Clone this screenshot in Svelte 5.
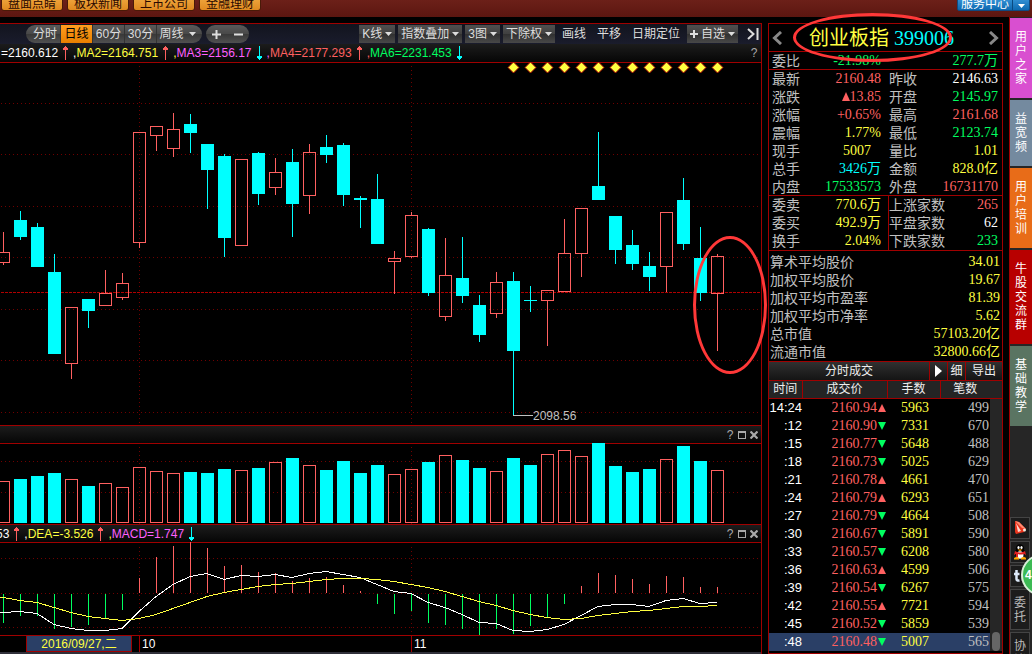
<script>
const page_title = '创业板指 399006'

const topMenu = ['盘面点睛', '板块新闻', '上市公司', '金融理财']
const periods = ['分时', '日线', '60分', '30分', '周线']
const diamonds = Array.from({ length: 13 }, (_, i) => 513 + i * 17)

const maList = [
    { text: '=2160.612', color: 'white', dir: 'up' },
    { text: 'MA2=2164.751', color: 'yellow', dir: 'up' },
    { text: 'MA3=2156.17', color: 'magenta', dir: 'down' },
    { text: 'MA4=2177.293', color: 'red', dir: 'up' },
    { text: 'MA6=2231.453', color: 'green', dir: 'down' },
]
const macdList = [
    { text: '53', color: 'white', dir: 'up' },
    { text: 'DEA=-3.526', color: 'yellow', dir: 'up' },
    { text: 'MACD=1.747', color: 'magenta', dir: 'down' },
]

// up, high, top, bottom, low, volume, macd, dif, dea
const days = [
    [1, 232, 252, 263, 265, 481, 623, 612, 597],
    [0, 211, 220, 237, 240, 479, 616, 611, 600],
    [0, 223, 227, 267, 267, 476, 616, 613, 602],
    [0, 254, 272, 354, 354, 473, 629, 624, 607],
    [1, 307, 307, 364, 379, 479, 627, 628, 612],
    [0, 299, 299, 311, 328, 486, 625, 630, 616],
    [1, 270, 293, 306, 306, 483, 618, 630, 618],
    [1, 273, 283, 298, 300, 487, 610, 628, 620],
    [1, 132, 132, 243, 248, 467, 578, 611, 618],
    [1, 126, 126, 136, 151, 471, 557, 596, 614],
    [1, 113, 129, 149, 157, 473, 546, 584, 608],
    [0, 114, 124, 133, 153, 472, 542, 576, 602],
    [0, 144, 144, 170, 209, 473, 548, 573, 596],
    [0, 154, 156, 238, 257, 469, 566, 579, 592],
    [1, 159, 159, 246, 246, 470, 565, 575, 589],
    [0, 152, 153, 194, 205, 468, 572, 576, 586],
    [1, 158, 172, 188, 195, 462, 573, 574, 584],
    [0, 149, 162, 204, 237, 458, 581, 577, 583],
    [1, 144, 152, 196, 214, 465, 578, 573, 581],
    [0, 135, 147, 155, 163, 470, 577, 571, 579],
    [0, 143, 145, 195, 206, 461, 585, 574, 578],
    [0, 196, 198, 200, 228, 473, 591, 577, 578],
    [0, 174, 199, 244, 244, 465, 604, 584, 579],
    [1, 251, 258, 262, 294, 474, 614, 591, 581],
    [1, 212, 215, 257, 258, 469, 611, 593, 584],
    [0, 228, 229, 293, 296, 462, 623, 602, 587],
    [1, 238, 275, 317, 321, 455, 625, 607, 591],
    [0, 237, 278, 296, 303, 460, 629, 614, 596],
    [0, 295, 305, 335, 342, 468, 635, 622, 601],
    [1, 272, 282, 314, 318, 471, 629, 623, 605],
    [0, 272, 281, 351, 415, 458, 634, 630, 610],
    [0, 286, 300, 301, 312, 465, 626, 631, 614],
    [1, 290, 290, 301, 346, 454, 618, 629, 617],
    [1, 219, 253, 292, 292, 450, 604, 624, 619],
    [1, 208, 208, 254, 277, 456, 586, 615, 618],
    [0, 132, 186, 200, 200, 443, 573, 606, 615],
    [0, 216, 216, 250, 264, 466, 575, 604, 613],
    [0, 230, 245, 264, 270, 472, 579, 604, 611],
    [0, 252, 266, 277, 291, 469, 584, 606, 610],
    [1, 212, 212, 267, 292, 459, 576, 600, 608],
    [0, 178, 200, 244, 250, 446, 577, 598, 606],
    [0, 227, 258, 293, 301, 461, 587, 603, 606],
    [1, 254, 256, 294, 351, 470, 587, 602, 605],
].map(([up, high, top, bottom, low, vol, macd, dif, dea], i) => ({
    x: 3 + i * 17, up, high, top, bottom, low, vol, macd, dif, dea
}))

const difLine = days.map(d => `${d.x},${d.dif - 542.5}`).join(' ')
const deaLine = days.map(d => `${d.x},${d.dea - 542.5}`).join(' ')

const quotes = [
    ['最新', '2160.48', 'red', '昨收', '2146.63', 'white'],
    ['涨跌', '▲13.85', 'red', '开盘', '2145.97', 'green'],
    ['涨幅', '+0.65%', 'red', '最高', '2161.68', 'red'],
    ['震幅', '1.77%', 'yellow', '最低', '2123.74', 'green'],
    ['现手', '5007', 'yellow', '量比', '1.01', 'yellow'],
    ['总手', '3426万', 'cyan', '金额', '828.0亿', 'yellow'],
    ['内盘', '17533573', 'green', '外盘', '16731170', 'red'],
]
const counts = [
    ['委卖', '770.6万', 'yellow', '上涨家数', '265', 'red'],
    ['委买', '492.9万', 'yellow', '平盘家数', '62', 'white'],
    ['换手', '2.04%', 'yellow', '下跌家数', '233', 'green'],
]
const summary = [
    ['算术平均股价', '34.01'],
    ['加权平均股价', '19.67'],
    ['加权平均市盈率', '81.39'],
    ['加权平均市净率', '5.62'],
    ['总市值', '57103.20亿'],
    ['流通市值', '32800.66亿'],
]
const trades = [
    ['14:24', '2160.94', 1, 5963, 499],
    [':12', '2160.90', 0, 7331, 670],
    [':15', '2160.77', 0, 5648, 488],
    [':18', '2160.73', 0, 5025, 629],
    [':21', '2160.78', 1, 4661, 470],
    [':24', '2160.79', 1, 6293, 651],
    [':27', '2160.79', 0, 4664, 508],
    [':30', '2160.67', 0, 5891, 590],
    [':33', '2160.57', 0, 6208, 580],
    [':36', '2160.63', 1, 4599, 506],
    [':39', '2160.54', 0, 6267, 575],
    [':42', '2160.55', 1, 7721, 594],
    [':45', '2160.52', 0, 5859, 539],
    [':48', '2160.48', 0, 5007, 565],
]
const sideTabs = [
    ['用户之家', 'pink'],
    ['益宽频', 'slate'],
    ['用户培训', 'orange'],
    ['牛股交流群', 'crimson'],
    ['基础教学', 'moss'],
]

let period = $state('日线')
let selected = $state(13)
</script>

<svelte:head>
    <title>{page_title}</title>
</svelte:head>

{#snippet caret()}
    <svg width="7" height="4" viewBox="0 0 7 4"><path d="M0 0h7L3.500 4z" fill="currentColor" /></svg>
{/snippet}

{#snippet indicators(list)}
    {#each list as item, i}
        <span class={item.color}>{#if i > 0}<span class={list[i - 1].color}>,</span>{/if}{item.text}</span>
        <svg width="15" height="16" viewBox="0 0 15 16" shape-rendering="crispEdges">
            {#if item.dir == 'up'}
                <path d="M7 1h1v1h1v1h1v2h-2v10h-1v-10h-2v-2h1v-1h1z" fill="#ff6060" />
            {:else}
                <path d="M7 1h1v10h2v2h-1v1h-1v1h-1v-1h-1v-1h-1v-2h2z" fill="#00ffff" />
            {/if}
        </svg>
    {/each}
{/snippet}

{#snippet paneTools()}
    <div class="pane_tools">
        <button aria-label="帮助">?</button>
        <button aria-label="最大化">
            <svg width="8" height="8" viewBox="0 0 8 8" shape-rendering="crispEdges"><path d="M0 0h8v8H0zM1 2v5h6V2z" fill="currentColor" fill-rule="evenodd" /></svg>
        </button>
        <button aria-label="关闭">
            <svg width="8" height="8" viewBox="0 0 8 8"><path d="M.5 .5l7 7M7.500 .5l-7 7" fill="none" stroke="currentColor" stroke-width="2.200" /></svg>
        </button>
    </div>
{/snippet}

<div class="app">
    <header class="top">
        <nav>
            {#each topMenu as name}
                <button>{name}</button>
            {/each}
        </nav>
        <button class="service"><span>服务中心</span><i>{@render caret()}</i></button>
    </header>

    <main>
        <section class="charts">
            <div class="toolbar">
                <div class="pill periods">
                    {#each periods as name}
                        <button class:active={period == name} onclick={() => period = name}>
                            {name}{#if name == '周线'}{@render caret()}{/if}
                        </button>
                    {/each}
                </div>
                <div class="pill zoom">
                    <button aria-label="放大"><svg width="9" height="9" viewBox="0 0 9 9"><path d="M4.500 0v9M0 4.500h9" stroke="#ddd" stroke-width="2" /></svg></button>
                    <button aria-label="缩小"><svg width="9" height="9" viewBox="0 0 9 9"><path d="M0 4.500h9" stroke="#ddd" stroke-width="2" /></svg></button>
                </div>
                <div class="tools">
                    <button class="drop">K线{@render caret()}</button>
                    <button class="drop">指数叠加{@render caret()}</button>
                    <button class="drop">3图{@render caret()}</button>
                    <button class="drop">下除权{@render caret()}</button>
                    <button class="plain">画线</button>
                    <button class="plain">平移</button>
                    <button class="plain">日期定位</button>
                    <button class="drop">
                        <svg width="8" height="8" viewBox="0 0 8 8"><path d="M4 0v8M0 4h8" stroke="#ddd" stroke-width="2" /></svg>自选{@render caret()}
                    </button>
                    <button class="end" aria-label="收起">
                        <svg width="12" height="12" viewBox="0 0 12 12"><path d="M1 1l5.500 5L1 11M10.500 0v12" fill="none" stroke="#ddd" stroke-width="2" /></svg>
                    </button>
                </div>
            </div>

            <div class="ind ma_ind">
                {@render indicators(maList)}
                <div class="pane_tools"><button aria-label="均线帮助">?</button></div>
            </div>

            <!-- K线 -->
            <div class="pane">
                <svg class="plot kline" viewBox="0 63 761 362" preserveAspectRatio="none" shape-rendering="crispEdges">
                    {#each [103, 154, 206, 257, 309, 360, 412] as y}
                        <line class="grid" x1="1" x2="761" y1={y + 0.5} y2={y + 0.5} />
                    {/each}
                    <line class="grid" x1="139.500" x2="139.500" y1="66" y2="425" />
                    <line class="grid" x1="411.500" x2="411.500" y1="66" y2="425" />
                    <line class="last" x1="1" x2="761" y1="292.500" y2="292.500" />
                    {#each days as d}
                        {#if d.up}
                            <path class="up" d="M{d.x + 0.5} {d.high}V{d.top}M{d.x + 0.5} {d.bottom}V{d.low}M{d.x - 5.5} {d.top + 0.5}h12V{d.bottom - 0.5}h-12z" />
                        {:else}
                            <rect class="down" x={d.x} y={d.high} width="1" height={d.low - d.high} />
                            <rect class="down" x={d.x - 6} y={d.top} width="13" height={d.bottom - d.top} />
                        {/if}
                    {/each}
                    {#each diamonds as x}
                        <path d="M{x + 0.5} 62l5.500 5.500l-5.500 5.500l-5.500-5.500z" fill="#ffff40" stroke="#a00000" shape-rendering="auto" />
                    {/each}
                    <path d="M513 415.500h20" stroke="#c0c0c0" />
                    <text x="533" y="420">2098.56</text>
                </svg>
                <i class="mark mark_k"></i>
            </div>

            <!-- 成交量 -->
            <div class="ind">{@render paneTools()}</div>
            <svg class="plot volume" viewBox="0 444 761 80" preserveAspectRatio="none" shape-rendering="crispEdges">
                <line class="grid" x1="1" x2="761" y1="461.500" y2="461.500" />
                <line class="grid" x1="1" x2="761" y1="492.500" y2="492.500" />
                <line class="grid" x1="139.500" x2="139.500" y1="447" y2="524" />
                <line class="grid" x1="411.500" x2="411.500" y1="447" y2="524" />
                {#each days as d}
                    {#if d.up}
                        <rect class="up" x={d.x - 5.5} y={d.vol + 0.5} width="12" height={522 - d.vol} />
                    {:else}
                        <rect class="down" x={d.x - 6} y={d.vol} width="13" height={523 - d.vol} />
                    {/if}
                {/each}
            </svg>

            <!-- MACD -->
            <div class="ind macd_ind">
                {@render indicators(macdList)}
                {@render paneTools()}
            </div>
            <svg class="plot macd" viewBox="0 0 761 92" preserveAspectRatio="none" shape-rendering="crispEdges">
                {#each [15, 50, 84] as y}
                    <line class="grid" x1="1" x2="761" y1={y + 0.5} y2={y + 0.5} />
                {/each}
                <line class="grid" x1="139.500" x2="139.500" y1="4" y2="92" />
                <line class="grid" x1="411.500" x2="411.500" y1="4" y2="92" />
                {#each days as d}
                    {#if d.macd < 593}
                        <line x1={d.x + 0.5} x2={d.x + 0.5} y1={d.macd - 543} y2="50" stroke="#ff6060" />
                    {:else}
                        <line x1={d.x + 0.5} x2={d.x + 0.5} y1="51" y2={d.macd - 543} stroke="#00ff60" />
                    {/if}
                {/each}
                <polyline points="0,69.500 {difLine}" stroke="#ffffff" />
                <polyline points="0,54.500 {deaLine}" stroke="#ffff40" />
            </svg>

            <div class="axis">
                <span class="date">2016/09/27,二</span>
                <span class="month">10</span>
                <span class="month">11</span>
            </div>
        </section>

        <section class="quote">
            <div class="title">
                <button aria-label="上一只"><svg width="10" height="14" viewBox="0 0 10 14"><path d="M9 1L2.500 7L9 13" fill="none" stroke="#888" stroke-width="3" /></svg></button>
                <h1>创业板指 <span class="cyan">399006</span></h1>
                <button aria-label="下一只"><svg width="10" height="14" viewBox="0 0 10 14"><path d="M1 1l6.500 6L1 13" fill="none" stroke="#888" stroke-width="3" /></svg></button>
                <i class="mark mark_title"></i>
            </div>
            <div class="block">
                <div class="row">
                    <span>委比</span><b class="green">-21.98%</b><span></span><b class="green">277.7万</b>
                </div>
            </div>
            <div class="block">
                {#each quotes as [k1, v1, c1, k2, v2, c2]}
                    <div class="row">
                        <span>{k1}</span><b class={c1} class:now={k1 == '现手'}>{#if v1[0] == '▲'}<svg width="8" height="9" viewBox="0 0 8 9"><path d="M4 0l4 9H0z" fill="#ff6060" /></svg>{v1.slice(1)}{:else}{v1}{/if}</b>
                        <span>{k2}</span><b class={c2}>{v2}</b>
                    </div>
                {/each}
            </div>
            <div class="block counts">
                {#each counts as [k1, v1, c1, k2, v2, c2]}
                    <div class="row">
                        <span>{k1}</span><b class={c1}>{v1}</b>
                        <span class="split">{k2}</span><b class={c2}>{v2}</b>
                    </div>
                {/each}
            </div>
            <div class="block summary">
                {#each summary as [k, v]}
                    <div class="sum_row"><span>{k}</span><b class="yellow">{v}</b></div>
                {/each}
            </div>

            <div class="deal_bar">
                <strong>分时成交</strong>
                <button aria-label="播放"><svg width="7" height="12" viewBox="0 0 7 12"><path d="M0 0l7 6l-7 6z" fill="#fff" /></svg></button>
                <button>细</button>
                <button class="export">导出</button>
            </div>
            <div class="deal">
                <table>
                    <thead>
                        <tr><th class="c_time">时间</th><th class="c_price">成交价</th><th class="c_vol">手数</th><th class="c_num">笔数</th><th class="c_bar"></th></tr>
                    </thead>
                    <tbody>
                        {#each trades as [time, price, up, vol, num], i}
                            <tr class:selected={selected == i} onclick={() => selected = i}>
                                <td class="time">{time}</td>
                                <td class="price">{price}<svg width="8" height="8" viewBox="0 0 8 8">{#if up}<path d="M4 0l4 8H0z" fill="#ff6060" />{:else}<path d="M0 0h8L4 8z" fill="#00ff60" />{/if}</svg></td>
                                <td class="vol">{vol}</td>
                                <td class="num">{num}</td>
                                <td class="bar"></td>
                            </tr>
                        {/each}
                    </tbody>
                </table>
                <i class="thumb"></i>
            </div>
        </section>

        <aside>
            {#each sideTabs as [name, color]}
                <button class="tab {color}">{name}</button>
            {/each}
            <div class="side_tools">
                <button aria-label="喇叭">
                    <svg width="16" height="16" viewBox="0 0 16 16"><path d="M3 1l4 1 7 7-2 3-8 2-1-2z" fill="#e8341c" /><path d="M4 3l2 9 3-1z" fill="#ffd8d0" /><path d="M3 1l4 1 7 7-4-1z" fill="#ff8a70" /><circle cx="12.500" cy="10" r="1.500" fill="#f4ece0" /></svg>
                </button>
                <button aria-label="QQ">
                    <svg width="16" height="16" viewBox="0 0 16 16"><ellipse cx="8" cy="9" rx="5" ry="5.500" fill="#000" /><circle cx="8" cy="4.500" r="4.200" fill="#000" /><ellipse cx="8" cy="11" rx="3.500" ry="3.800" fill="#fff" /><ellipse cx="6.500" cy="3.500" rx="1.100" ry="1.500" fill="#fff" /><ellipse cx="9.500" cy="3.500" rx="1.100" ry="1.500" fill="#fff" /><path d="M5.500 5.500h5l-2.500 1.700z" fill="#ffa800" /><path d="M3 7q5 3 10 0l1 4-2-1q-4 1-6 0v3H4v-3l-2 1z" fill="#e02020" /><path d="M2 14q3-2 5 0v1.500H2zM9 14q3-2 5 0v1.500H9z" fill="#ffa800" /></svg>
                </button>
                <button aria-label="微博">
                    <svg width="16" height="16" viewBox="0 0 16 16"><path d="M4.500 2v9q0 2 3 1.500M2 6h5.500M11 8v5" fill="none" stroke="#dce8f8" stroke-width="2.500" /></svg>
                </button>
                <button class="word">委托</button>
                <button class="word">协议</button>
                <span class="bubble">4</span>
            </div>
        </aside>
    </main>
</div>

<style>
:global(body) {
    margin: 0;
    background: #000;
}
.app {
    overflow: hidden;
    background: #000;
    color: #ddd;
    font: 12px/18px "Liberation Sans", "Noto Sans CJK SC", sans-serif;
}
* {
    box-sizing: border-box;
}
button {
    display: flex;
    align-items: center;
    justify-content: center;
    margin: 0;
    padding: 0;
    border: 0;
    background: none;
    color: inherit;
    font: inherit;
    white-space: nowrap;
    cursor: pointer;
}
svg {
    flex: none;
}
i {
    font-style: normal;
}
.white { color: #fff; }
.yellow { color: #ffff40; }
.red { color: #ff6060; }
.green { color: #00ff60; }
.cyan { color: #00ffff; }
.magenta { color: #ff60ff; }

/* 顶部 */
.top {
    display: flex;
    align-items: flex-end;
    justify-content: space-between;
    height: 17px;
    padding: 0 2px 6px 1px;
    background: linear-gradient(#6c2019, #5c1610);
    overflow: hidden;
}
.top nav {
    display: flex;
    gap: 4px;
}
.top button {
    height: 15px;
    line-height: 14px;
}
.top nav button {
    width: 62px;
    border: 1px solid #4a1a08;
    border-radius: 3px;
    background: linear-gradient(#f0a840, #e08a20);
    color: #2a0800;
}
.top .service {
    width: 73px;
    border: 1px solid #104a80;
    border-radius: 2px;
    background: linear-gradient(#3a98dc, #0d69b0);
    color: #fff;
}
.service span {
    width: 55px;
    border-right: 1px solid #0a4a80;
}
.service i {
    flex: 1;
}

main {
    display: flex;
}
.charts {
    flex: 1;
    min-width: 0;
    margin: 6px 6px 0 0;
    border-top: 1px solid #a00000;
    border-right: 1px solid #a00000;
}
.toolbar {
    display: flex;
    align-items: center;
    gap: 4px;
    height: 20px;
    padding: 0 2px 0 26px;
    background: linear-gradient(#12141e, #1a1c2c);
}
.pill {
    display: flex;
    height: 18px;
    border-radius: 9px;
    background: linear-gradient(#5a5a5a, #484848 50%, #383838 50%, #505050);
    overflow: hidden;
}
.periods button {
    width: 32px;
    border-left: 1px solid #333;
}
.periods button:first-child {
    width: 34px;
    padding-left: 4px;
    border: 0;
}
.periods button:last-child {
    width: 46px;
    gap: 5px;
    padding-right: 4px;
}
.periods .active {
    background: linear-gradient(#ff9c20, #e88000);
    color: #000;
}
.zoom {
    width: 43px;
}
.zoom button {
    flex: 1;
}
.tools {
    display: flex;
    align-items: center;
    gap: 3px;
    margin-left: auto;
}
.drop {
    gap: 3px;
    height: 18px;
    padding: 0 3px;
    background: linear-gradient(#505050, #404040 50%, #303030 50%, #484848);
}
.plain {
    padding: 0 4px;
}
.end {
    padding-left: 6px;
}

.ind {
    display: flex;
    align-items: center;
    height: 18px;
    border-bottom: 1px solid #a00000;
    background: linear-gradient(#1c1c1c, #060606);
    white-space: nowrap;
}
.ma_ind {
    height: 19px;
    padding-left: 1px;
}
.macd_ind {
    margin-left: -4px;
}
.pane_tools {
    display: flex;
    gap: 4px;
    margin-left: auto;
    padding-right: 3px;
    color: #aaa;
}
.pane_tools button {
    width: 8px;
}
.pane {
    position: relative;
}
.plot {
    display: block;
    width: 100%;
    border-bottom: 1px solid #a00000;
    overflow: visible;
}
.kline { height: 363px; }
.volume { height: 81px; }
.macd { height: 93px; }
.plot text {
    fill: #c0c0c0;
    font-size: 12px;
}
.grid {
    stroke: #700000;
    stroke-dasharray: 1 3;
}
.last {
    stroke: #b00000;
    stroke-dasharray: 3 1;
}
.up {
    fill: none;
    stroke: #ff6060;
}
.down {
    fill: #00ffff;
}
polyline {
    fill: none;
}
.mark {
    position: absolute;
    z-index: 2;
    border: 3px solid #ff3838;
    border-radius: 50%;
    pointer-events: none;
}
.mark_k {
    top: 173px;
    right: -6px;
    width: 74px;
    height: 138px;
}
.axis {
    display: flex;
    height: 18px;
    padding-left: 26px;
    border-bottom: 2px solid #30303a;
    color: #fff;
    line-height: 16px;
}
.date {
    width: 106px;
    margin-right: 7px;
    border: 1px solid #a00000;
    border-top: 0;
    background: #2a3f66;
    color: #ffff40;
    text-align: center;
}
.month {
    width: 272px;
    padding-left: 2px;
    border-left: 1px solid #a00000;
}

/* 报价 */
.quote {
    width: 235px;
    margin-top: 6px;
    border: 1px solid #a00000;
    color: #c0c0c0;
    font-size: 14px;
}
.title {
    position: relative;
    display: flex;
    align-items: center;
    justify-content: space-between;
    height: 28px;
    padding: 0 3px;
    border-bottom: 1px solid #a00000;
}
h1 {
    margin: 0 8px 0 0;
    color: #ffff40;
    font: 20px/26px "Liberation Serif", "Noto Sans CJK SC", serif;
}
.mark_title {
    top: -11px;
    left: 24px;
    width: 159px;
    height: 49px;
}
.block {
    border-bottom: 1px solid #a00000;
}
.row {
    display: grid;
    grid-template-columns: 32px 1fr 63px 54px;
    height: 18px;
    padding: 0 4px 0 3px;
}
.row:last-child {
    margin-bottom: -1px;
}
.counts .row:last-child {
    margin-bottom: 0;
}
.row span {
    white-space: nowrap;
}
.row span:nth-child(3) {
    padding-left: 8px;
}
.row .split {
    border-left: 1px solid #a00000;
    margin-left: 7px;
}
.row .split:nth-child(3) {
    padding-left: 0;
}
.row b, .sum_row b {
    font: 14px/18px "Liberation Serif", "Noto Sans CJK SC", serif;
    white-space: nowrap;
}
.row b {
    justify-self: end;
}
.row .now {
    padding-right: 10px;
}
.summary {
    padding: 2px 2px 0 1px;
}
.sum_row {
    display: flex;
    justify-content: space-between;
    height: 18px;
}
.deal_bar {
    display: flex;
    height: 19px;
    border-bottom: 1px solid #a00000;
    background: linear-gradient(#303030, #141414);
    color: #eee;
    font-size: 12px;
}
.deal_bar strong {
    flex: 1;
    font-weight: normal;
    text-align: center;
}
.deal_bar button {
    width: 18px;
    border-left: 1px solid #a00000;
}
.deal_bar .export {
    width: 37px;
}
.deal {
    position: relative;
}
table {
    width: 100%;
    border-collapse: collapse;
    table-layout: fixed;
}
th {
    height: 17px;
    padding: 0;
    border-bottom: 1px solid #a00000;
    border-left: 1px solid #a00000;
    background: #242424;
    color: #eee;
    font: 12px/16px "Liberation Sans", "Noto Sans CJK SC", sans-serif;
}
th:first-child, th:last-child {
    border-left: 0;
}
.c_time { width: 33px; }
.c_price { width: 85px; }
.c_vol { width: 53px; }
.c_bar { width: 12px; }
td {
    height: 18px;
    padding: 0;
    font: 14px/18px "Liberation Serif", serif;
    text-align: right;
}
.time {
    color: #fff;
    font: 13px/18px "Liberation Sans", sans-serif;
}
.price {
    color: #ff6060;
}
.price svg {
    margin: 0 1px;
}
.vol {
    padding-right: 11px;
    color: #ffff40;
}
.num {
    padding-right: 1px;
}
.bar {
    background: #262626;
}
.selected td:not(.bar) {
    background: #2a3f66;
}
.thumb {
    position: absolute;
    right: 2px;
    bottom: 0;
    width: 8px;
    height: 19px;
    border-radius: 4px;
    background: #666;
}

/* 侧栏 */
aside {
    display: flex;
    flex-direction: column;
    gap: 2px;
    width: 23px;
    margin-left: 6px;
    padding-top: 1px;
    border-left: 1px solid #a00000;
    background: #262626;
}
.tab {
    width: 100%;
    padding: 12px 5px;
    color: #fff;
    line-height: 14px;
    white-space: normal;
    word-break: break-all;
}
.pink { background: #d94fd0; }
.slate { background: #748a9f; }
.orange { background: #e86c18; }
.crimson { background: #b80000; }
.moss { background: #5a7462; }
.side_tools {
    position: relative;
    display: flex;
    flex-direction: column;
    gap: 2px;
    height: 137px;
    margin-top: auto;
    overflow: hidden;
}
.side_tools button {
    flex: none;
    width: 20px;
    height: 22px;
    border: 1px solid #444;
    background: #1c1c1c;
}
.side_tools .word {
    height: 41px;
    padding: 0 3px;
    color: #bbb;
    line-height: 14px;
    white-space: normal;
    word-break: break-all;
}
.bubble {
    position: absolute;
    top: 37px;
    left: 11px;
    width: 42px;
    height: 42px;
    padding-left: 2px;
    border: 2px solid #d8f0d8;
    border-radius: 50%;
    background: #3cba54;
    color: #fff;
    font-weight: bold;
    line-height: 38px;
}
</style>
